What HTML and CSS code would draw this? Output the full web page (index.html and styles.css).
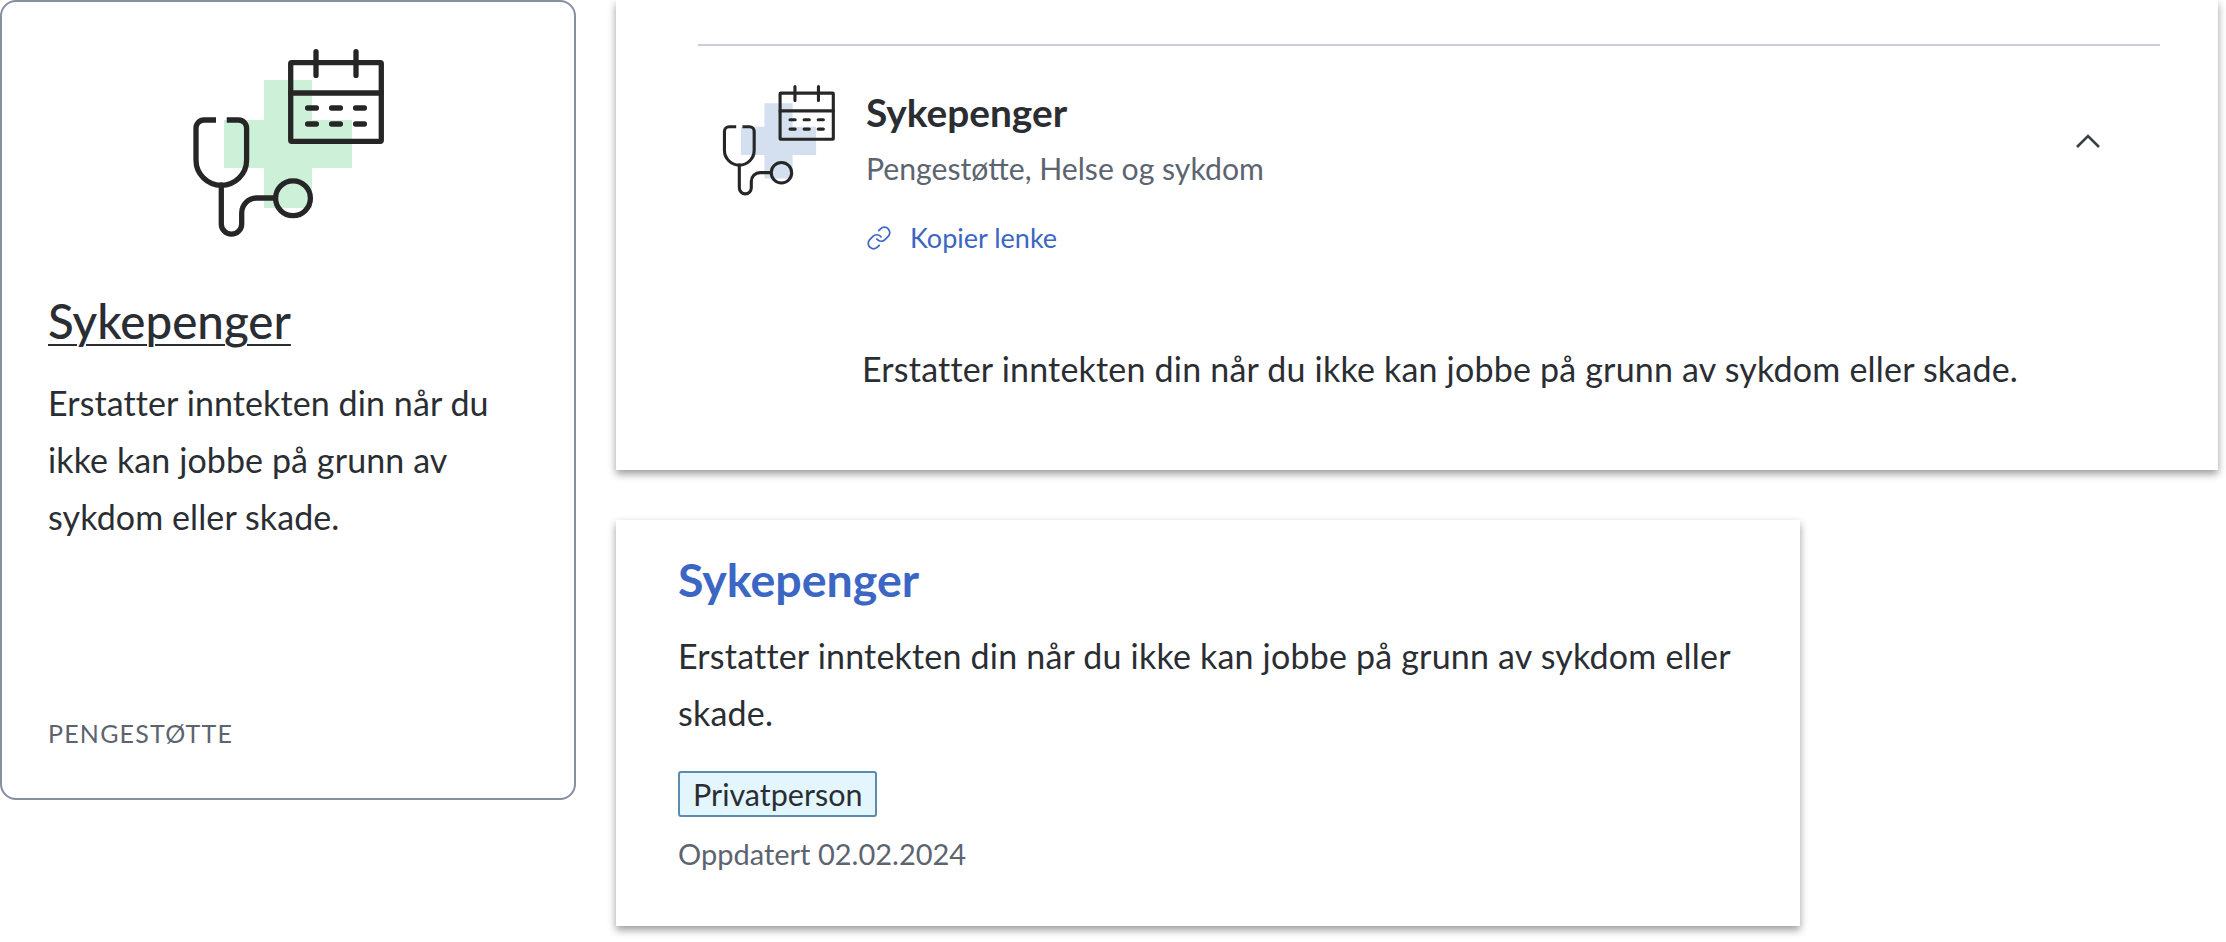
FILE: index.html
```html
<!DOCTYPE html>
<html lang="no">
<head>
<meta charset="utf-8">
<title>Sykepenger</title>
<link rel="stylesheet" href="styles.css">
</head>
<body>
<svg class="defs" width="0" height="0" aria-hidden="true">
  <symbol id="sick-icon" viewBox="0 0 240 240">
    <path class="cross" d="M96 60h48v40h40v48h-40v40H96v-40H56v-48h40z"/>
    <g class="lines">
      <rect x="122.7" y="42.7" width="90.6" height="78.6" rx="1"/>
      <path d="M148 31.6V55.4M188 31.6V55.4M122.7 73H213.3"/>
      <path d="M139.6 88h8.8M163.6 88h8.8M187.6 88h8.8M139.6 104h8.8M163.6 104h8.8M187.6 104h8.8"/>
      <path class="butt" d="M48 100H36a8 8 0 0 0-8 8v32a25.3 25.3 0 0 0 50.6 0v-32a8 8 0 0 0-8-8H58.7"/>
      <path d="M53.3 165v39a10.2 10.2 0 0 0 20.4 0v-11a15 15 0 0 1 15-15H107"/>
      <circle cx="125" cy="178.3" r="17.4"/>
    </g>
  </symbol>
</svg>
<main class="page">
  <article class="tile">
    <svg class="icon icon-large icon-green"><use href="#sick-icon"/></svg>
    <h2 class="tile-title">Sykepenger</h2>
    <p class="tile-text">Erstatter inntekten din når du ikke kan jobbe på grunn av sykdom eller skade.</p>
    <p class="tile-tag">PENGESTØTTE</p>
  </article>
  <div class="column">
    <section class="accordion">
      <div class="accordion-inner">
        <div class="accordion-head">
          <svg class="icon icon-small icon-blue"><use href="#sick-icon"/></svg>
          <div class="accordion-info">
            <h3 class="accordion-title">Sykepenger</h3>
            <p class="accordion-sub">Pengestøtte, Helse og sykdom</p>
            <a class="copy-link" href="#">
              <svg class="link-icon" viewBox="0 0 24 24"><path d="M10 13a5 5 0 0 0 7.54.54l3-3a5 5 0 0 0-7.07-7.07l-1.72 1.71"/><path d="M14 11a5 5 0 0 0-7.54-.54l-3 3a5 5 0 0 0 7.07 7.07l1.71-1.71"/></svg>
              <span>Kopier lenke</span>
            </a>
          </div>
          <svg class="chevron" viewBox="0 0 24 14"><path d="M1 13 12 2l11 11"/></svg>
        </div>
        <p class="accordion-text">Erstatter inntekten din når du ikke kan jobbe på grunn av sykdom eller skade.</p>
      </div>
    </section>
    <section class="search-card">
      <h3 class="search-title">Sykepenger</h3>
      <p class="search-text">Erstatter inntekten din når du ikke kan jobbe på grunn av sykdom eller skade.</p>
      <span class="badge">Privatperson</span>
      <p class="search-date">Oppdatert 02.02.2024</p>
    </section>
  </div>
</main>
</body>
</html>
```
FILE: styles.css
```css
* { box-sizing: border-box; }
html, body { margin: 0; padding: 0; background: #fff; }
body {
  font-family: "Lato", "Open Sans", sans-serif;
  color: #2a2e33;
  overflow: hidden;
}
p, h2, h3 { margin: 0; }
.defs { position: absolute; }
.page { display: flex; gap: 40px; width: 2226px; height: 942px; }

.icon { display: block; flex: none; }
.icon-large { width: 240px; height: 240px; }
.icon-small { width: 141px; height: 141px; }
.icon-green { color: #cdf1d8; }
.icon-blue { color: #d4e0ef; }
.cross { fill: currentColor; }
.lines { fill: none; stroke: #262626; stroke-width: 5.3; stroke-linecap: round; stroke-linejoin: round; }
.butt { stroke-linecap: butt; }

.tile {
  width: 576px;
  height: 800px;
  border: 2px solid #84909f;
  border-radius: 16px;
  padding: 18px 46px 0;
  display: flex;
  flex-direction: column;
}
.tile .icon { align-self: center; }
.tile-title {
  font-size: 47.5px;
  font-weight: 500;
  line-height: 56px;
  margin-top: 33px;
  text-decoration: underline;
  text-decoration-thickness: 2px;
  text-underline-offset: 5px;
}
.tile-text { font-size: 34px; letter-spacing: .1px; line-height: 57px; margin-top: 25px; }
.tile-tag {
  font-size: 25px;
  line-height: 32px;
  letter-spacing: 1.2px;
  color: #5c6470;
  margin-top: auto;
  margin-bottom: 49px;
}

.column { display: flex; flex-direction: column; gap: 50px; width: 1602px; }
.accordion, .search-card { background: #fff; box-shadow: 0 4px 8px rgba(0, 0, 0, .4); }
.accordion { height: 470px; padding: 44px 58px 0 82px; }
.accordion-inner { border-top: 2px solid #c9ced4; }
.accordion-head { display: flex; padding: 22px 0 0 10px; }
.accordion-info { margin-left: 17px; padding-top: 22px; }
.accordion-title { font-size: 38.8px; font-weight: 700; line-height: 44px; }
.accordion-sub { font-size: 30.2px; line-height: 44px; color: #5c6470; margin-top: 12px; }
.copy-link {
  display: flex;
  align-items: center;
  gap: 18px;
  margin-top: 28px;
  font-size: 27px;
  line-height: 40px;
  color: #3b66c4;
  text-decoration: none;
}
.link-icon { width: 26px; height: 26px; fill: none; stroke: currentColor; stroke-width: 1.6; stroke-linecap: round; stroke-linejoin: round; }
.chevron {
  width: 24px;
  height: 14px;
  margin: 66px 60px 0 auto;
  fill: none;
  stroke: #3a3f45;
  stroke-width: 2.6;
}
.accordion-text { font-size: 34px; letter-spacing: .2px; line-height: 44px; margin: 89px 0 0 164px; }

.search-card { width: 1184px; height: 406px; padding: 31px 62px 0; }
.search-title { font-size: 46.5px; font-weight: 700; line-height: 56px; color: #3b66c4; }
.search-text { font-size: 34px; letter-spacing: .2px; line-height: 57px; margin-top: 20px; }
.badge {
  display: inline-block;
  margin-top: 30px;
  height: 46px;
  padding: 0 13px;
  font-size: 30.5px;
  line-height: 42px;
  background: #e3f6fe;
  border: 2px solid #5a8cab;
  border-radius: 3px;
}
.search-date { font-size: 29px; line-height: 40px; color: #5c6470; margin-top: 17px; }
```
